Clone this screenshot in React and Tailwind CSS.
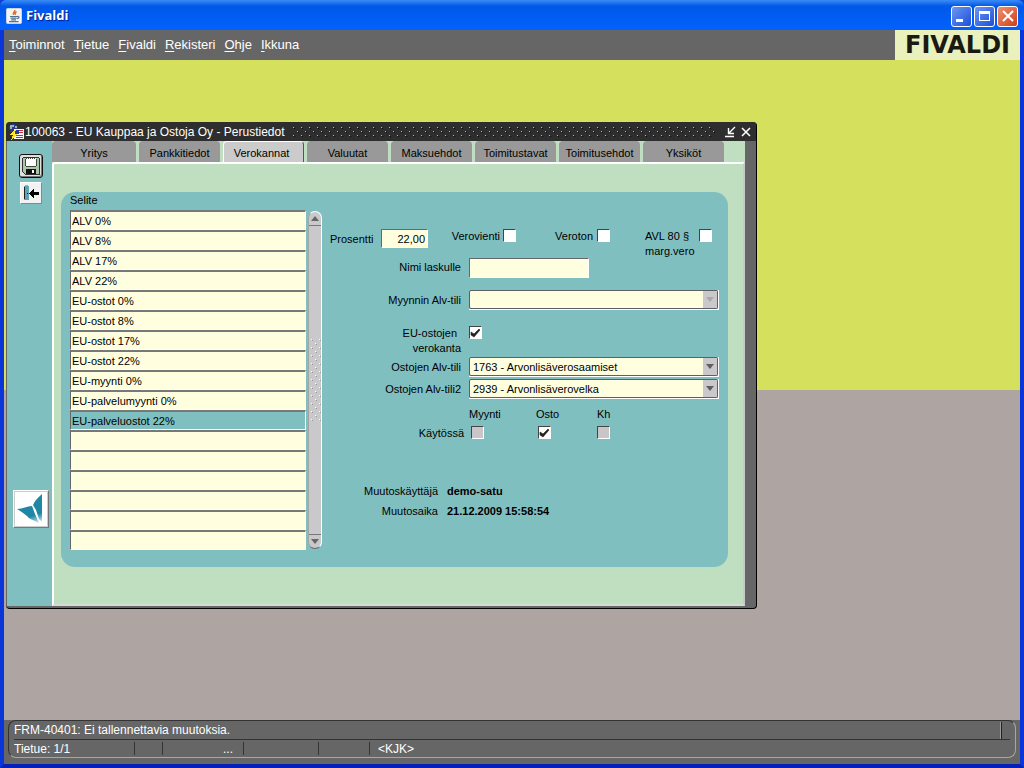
import React, { useState } from 'react';

const MENU = ['Toiminnot', 'Tietue', 'Fivaldi', 'Rekisteri', 'Ohje', 'Ikkuna'];

const TABS = [
  'Yritys',
  'Pankkitiedot',
  'Verokannat',
  'Valuutat',
  'Maksuehdot',
  'Toimitustavat',
  'Toimitusehdot',
  'Yksiköt',
];

const RATES = [
  'ALV 0%',
  'ALV 8%',
  'ALV 17%',
  'ALV 22%',
  'EU-ostot 0%',
  'EU-ostot 8%',
  'EU-ostot 17%',
  'EU-ostot 22%',
  'EU-myynti 0%',
  'EU-palvelumyynti 0%',
  'EU-palveluostot 22%',
  '',
  '',
  '',
  '',
  '',
  '',
];

const sunken = 'border border-t-[#66676b] border-l-[#66676b] border-r-white border-b-white bg-[#ffffe0]';

function JavaIcon() {
  return (
    <svg viewBox="0 0 16 16" className="size-4">
      <rect x="0.5" y="0.5" width="15" height="15" rx="1" fill="#f4f4f0" stroke="#c8d4e8" />
      <path d="M8.600 2c1.200 1.600-2.400 2.600-1 4.800M10.600 3.600c-1.600 1-2 1.800-1 3.200" fill="none" stroke="#e06a1c" strokeWidth="1.500" />
      <path d="M4 8.500h7.500M4.600 10.200h6M5.200 11.800h4.800M3 13.600h9.500M11.500 8.500c2.200-.4 1.800 2-.6 2.200" fill="none" stroke="#4f7396" strokeWidth="1.200" />
    </svg>
  );
}

function FormIcon() {
  return (
    <svg viewBox="0 0 16 16" className="size-4 shrink-0" shapeRendering="crispEdges">
      <circle cx="5.500" cy="4.500" r="4.500" fill="#2b3787" />
      <path d="M2 1h4v2H4v2H2zM7 2h2v2H7z" fill="#8fb6c4" />
      <rect x="6" y="5" width="10" height="10" fill="#f6f6f6" />
      <path d="M11 6h4v1h-4zM11 8h4v1h-4zM8 11h7v1H8zM8 13h7v1H8z" fill="#c2303c" />
      <path d="M7 6h4v4H7z" fill="#2a3aa0" />
      <path d="M6 6L2 11h3l-2 5 6-6H6l2-4z" fill="#ffe32e" />
      <path d="M6 15h10v1H6z" fill="#333" />
    </svg>
  );
}

function SaveIcon() {
  return (
    <svg viewBox="0 0 20 20" className="size-5" shapeRendering="crispEdges">
      <path d="M2 1h16v1h1v17H4l-3-3V2h1z" fill="#333" />
      <path d="M2 2h16v16H4l-2-2z" fill="#a9c8a4" />
      <path d="M5 2h10v8H5z" fill="#fff" />
      <path d="M5 2h1v1H5zM7 2h1v1H7zM9 2h1v1H9zM11 2h1v1h-1zM13 2h1v1h-1zM5 10h10v1H5zM4 3h1v7H4zM15 3h1v7h-1z" fill="#444" />
      <path d="M5 13h10v5H5z" fill="#111" />
      <path d="M11 14h2v3h-2z" fill="#fff" />
    </svg>
  );
}

function ExitIcon() {
  return (
    <svg viewBox="0 0 18 18" className="size-[18px]" shapeRendering="crispEdges">
      <path d="M2 2h5v14H2z" fill="#5fa3b5" />
      <path d="M2 3h1v12H2z" fill="#222" />
      <path d="M5 9h1v1H5z" fill="#111" />
      <path d="M3 1h3v1H3z" fill="#7fc89a" />
      <path d="M7 9h1V8h1V7h1V6h1V5h1v3h5v3h-5v3h-1v-1h-1v-1H9v-1H8v-1H7z" fill="#000" />
    </svg>
  );
}

function BirdLogo() {
  return (
    <svg viewBox="0 0 32 34" className="h-[34px] w-8">
      <defs>
        <linearGradient id="tail" gradientUnits="userSpaceOnUse" x1="18" y1="17" x2="23" y2="32">
          <stop offset="0.4" stopColor="#1f86a3" />
          <stop offset="1" stopColor="#e4f1f4" />
        </linearGradient>
      </defs>
      <path d="M2 17C8 17 12 14 17 14L20 22L24 31C18 28 14 27 12 24C9 22 6 19 2 17z" fill="url(#tail)" />
      <path d="M18 13C20 8 24 5 27 2V30L24 27L21 18z" fill="url(#tail)" />
    </svg>
  );
}

function CheckBox({ id, label, checked, disabled, onChange }) {
  return (
    <span className="relative block size-[13px] shrink-0">
      <input
        id={id}
        type="checkbox"
        aria-label={label}
        checked={checked}
        disabled={disabled}
        onChange={onChange}
        className="block size-[13px] appearance-none border border-t-[#444] border-l-[#444] border-r-white border-b-white bg-white disabled:bg-[#c9c5c8]"
      />
      {checked && (
        <svg viewBox="0 0 13 13" className="pointer-events-none absolute inset-0 size-[13px]">
          <path d="M2 6l3 2 5-5 1 1-6 7-3-2z" fill="#222" stroke="#222" strokeWidth="0.6" />
        </svg>
      )}
    </span>
  );
}

function Combo({ id, value, disabled }) {
  return (
    <div className="relative w-[250px] border-r border-b border-white">
      <select
        id={id}
        defaultValue={value}
        disabled={disabled}
        className="block h-[19px] w-full appearance-none rounded-[2px] border border-[#5d5e66] bg-[#ffffe0] pl-[3px] text-[11px] leading-4 text-black opacity-100"
      >
        <option value={value}>{value}</option>
      </select>
      <span className="pointer-events-none absolute top-px right-px flex h-[17px] w-[14px] items-center justify-center bg-[#cbc8cb]">
        <svg viewBox="0 0 8 5" className="h-[5px] w-2">
          <path d="M0 0h8L4 5z" fill={disabled ? '#aaa8aa' : '#5f5f62'} />
        </svg>
      </span>
    </div>
  );
}

function TitleBar() {
  return (
    <header className="flex h-[30px] items-center gap-1 rounded-t-md bg-linear-to-b from-[#3a8bf5] from-0% via-[#0058e8] via-20% to-[#0260fb] to-90% px-[6px] pt-[2px]">
      <JavaIcon />
      <h1 className="font-['Open_Sans',sans-serif] text-[13px] font-bold text-white [text-shadow:1px_1px_1px_#0a1883]">Fivaldi</h1>
      <div className="ml-auto flex gap-[2px]">
        <button type="button" aria-label="Pienennä" className="flex size-[21px] items-end rounded-[3px] border border-white bg-linear-to-br from-[#6d95f2] to-[#1c4cd8] p-1">
          <span className="h-[3px] w-[7px] bg-white" />
        </button>
        <button type="button" aria-label="Suurenna" className="flex size-[21px] items-center justify-center rounded-[3px] border border-white bg-linear-to-br from-[#6d95f2] to-[#1c4cd8]">
          <span className="h-[10px] w-[11px] border border-t-[3px] border-white" />
        </button>
        <button type="button" aria-label="Sulje" className="flex size-[21px] items-center justify-center rounded-[3px] border border-white bg-linear-to-br from-[#f0906f] to-[#cf3a14]">
          <svg viewBox="0 0 12 12" className="size-3">
            <path d="M1 1l10 10M11 1L1 11" stroke="#fff" strokeWidth="2" />
          </svg>
        </button>
      </div>
    </header>
  );
}

function MenuBar() {
  return (
    <nav className="flex h-[30px] items-center justify-between bg-[#666] pl-[5px]">
      <div className="flex gap-[9px]">
        {MENU.map((item) => (
          <button key={item} type="button" className="text-[13px] text-white">
            <span className="underline underline-offset-2">{item[0]}</span>
            {item.slice(1)}
          </button>
        ))}
      </div>
      <div className="flex h-full w-[125px] items-center justify-center bg-[#ebf1bd] font-['DejaVu_Sans',sans-serif] text-2xl leading-none font-bold text-[#1a1a12]">
        FIVALDI
      </div>
    </nav>
  );
}

function RateList({ selected, onSelect }) {
  return (
    <div className="flex items-center gap-[2px]">
      <ul className="w-[236px]">
        {RATES.map((rate, i) => (
          <li key={i}>
            <input
              readOnly
              value={rate}
              aria-label={`Selite ${i + 1}`}
              onFocus={() => rate && onSelect(i)}
              className={`block h-5 w-full border border-t-2 border-t-[#77787a] border-l-[#66676b] border-r-white border-b-white pl-px text-[11px] text-black outline-none ${i === selected ? 'bg-[#80bfc0]' : 'bg-[#ffffe0]'}`}
            />
          </li>
        ))}
      </ul>
      <div className="flex h-[338px] w-[14px] flex-col justify-between rounded-full border border-t-white border-r-white border-b-[#66676b] border-l-[#a5a5a5] bg-[#c9c8cb]">
        <button type="button" aria-label="Ylös" className="flex h-[14px] items-center justify-center border-b border-[#77787c]">
          <svg viewBox="0 0 8 5" className="h-[5px] w-2">
            <path d="M0 5h8L4 0z" fill="#666" />
          </svg>
        </button>
        <svg width="12" height="84" className="block">
          <defs>
            <pattern id="grip" width="8" height="8" patternUnits="userSpaceOnUse">
              <path d="M2 1h1v1H2zM6 5h1v1H6z" fill="#fff" />
              <path d="M3 2h1v1H3zM7 6h1v1H7z" fill="#999" />
            </pattern>
          </defs>
          <rect width="12" height="84" fill="url(#grip)" />
        </svg>
        <button type="button" aria-label="Alas" className="flex h-[14px] items-center justify-center border-t border-[#77787c]">
          <svg viewBox="0 0 8 5" className="h-[5px] w-2">
            <path d="M0 0h8L4 5z" fill="#666" />
          </svg>
        </button>
      </div>
    </div>
  );
}

function RateForm() {
  const [flags, setFlags] = useState({ vienti: false, veroton: false, avl: false, eu: true });
  const toggle = (key) => () => setFlags({ ...flags, [key]: !flags[key] });

  return (
    <form className="flex-1 pt-9 pl-2">
      <div className="flex h-[29px] items-start">
        <label htmlFor="prosentti" className="w-[51px] pt-[3px]">Prosentti</label>
        <input id="prosentti" defaultValue="22,00" className={`h-[19px] w-[47px] pr-[2px] text-right ${sunken}`} />
        <div className="flex w-[88px] justify-end gap-[3px]">
          <label htmlFor="vienti">Verovienti</label>
          <CheckBox id="vienti" checked={flags.vienti} onChange={toggle('vienti')} />
        </div>
        <div className="flex w-[94px] justify-end gap-1">
          <label htmlFor="veroton">Veroton</label>
          <CheckBox id="veroton" checked={flags.veroton} onChange={toggle('veroton')} />
        </div>
        <div className="flex w-[102px] justify-end">
          <label htmlFor="avl" className="w-[54px]">AVL 80 § marg.vero</label>
          <CheckBox id="avl" checked={flags.avl} onChange={toggle('avl')} />
        </div>
      </div>
      <div className="flex h-8 items-start gap-2">
        <label htmlFor="nimi" className="w-[131px] pt-[2px] text-right">Nimi laskulle</label>
        <input id="nimi" className={`h-5 w-[120px] ${sunken}`} />
      </div>
      <div className="flex h-9 items-start gap-2">
        <label htmlFor="myynnintili" className="w-[131px] pt-[3px] text-right">Myynnin Alv-tili</label>
        <Combo id="myynnintili" value="" disabled />
      </div>
      <div className="flex h-[31px] items-start gap-2">
        <label htmlFor="eu" className="w-[131px] text-right">
          <span className="block pr-1">EU-ostojen</span>
          <span className="block">verokanta</span>
        </label>
        <CheckBox id="eu" checked={flags.eu} onChange={toggle('eu')} />
      </div>
      <div className="flex h-[22px] items-start gap-2">
        <label htmlFor="ostotili" className="w-[131px] pt-[3px] text-right">Ostojen Alv-tili</label>
        <Combo id="ostotili" value="1763 - Arvonlisäverosaamiset" />
      </div>
      <div className="flex h-[22px] items-start gap-2">
        <label htmlFor="ostotili2" className="w-[131px] pt-[3px] text-right">Ostojen Alv-tili2</label>
        <Combo id="ostotili2" value="2939 - Arvonlisäverovelka" />
      </div>
      <div className="mt-[6px] flex pl-[139px]">
        <span className="w-[67px]">Myynti</span>
        <span className="w-[61px]">Osto</span>
        <span>Kh</span>
      </div>
      <div className="mt-1 flex items-start">
        <span className="w-[141px] pr-[7px] text-right">Käytössä</span>
        <span className="w-[67px]"><CheckBox label="Käytössä Myynti" checked={false} disabled /></span>
        <span className="w-[59px]"><CheckBox label="Käytössä Osto" checked onChange={() => {}} /></span>
        <CheckBox label="Käytössä Kh" checked={false} disabled />
      </div>
      <dl className="mt-[43px] grid grid-cols-[108px_auto] gap-x-[9px] gap-y-[5px]">
        <dt className="text-right">Muutoskäyttäjä</dt>
        <dd className="font-bold">demo-satu</dd>
        <dt className="text-right">Muutosaika</dt>
        <dd className="font-bold">21.12.2009 15:58:54</dd>
      </dl>
    </form>
  );
}

function TaxWindow() {
  const [tab, setTab] = useState('Verokannat');
  const [selected, setSelected] = useState(10);

  return (
    <section className="absolute top-[62px] left-[2px] flex h-[487px] w-[751px] flex-col overflow-hidden rounded-[4px] border-r border-b border-black bg-[#666]">
      <header className="flex h-[19px] shrink-0 items-center bg-[#2e2e2e] pr-1 pl-[2px] text-white">
        <FormIcon />
        <h2 className="ml-px text-xs whitespace-nowrap">100063 - EU Kauppaa ja Ostoja Oy - Perustiedot</h2>
        <svg className="mx-2 h-3 flex-1">
          <defs>
            <pattern id="dots" width="8" height="8" patternUnits="userSpaceOnUse">
              <path d="M1 1h1v1H1zM5 5h1v1H5z" fill="#b8b8b8" />
              <path d="M2 2h1v1H2zM6 6h1v1H6z" fill="#0c0c0c" />
            </pattern>
          </defs>
          <rect width="100%" height="100%" fill="url(#dots)" />
        </svg>
        <button type="button" aria-label="Pienennä ikkuna">
          <svg viewBox="0 0 12 12" className="size-3">
            <path d="M1 10.500h9M11 1L5 7M4.500 2v5.500H10" fill="none" stroke="#fff" strokeWidth="1.400" />
          </svg>
        </button>
        <button type="button" aria-label="Sulje ikkuna" className="ml-1">
          <svg viewBox="0 0 12 12" className="size-3">
            <path d="M2 2l8 8M10 2l-8 8" stroke="#fff" strokeWidth="1.600" />
          </svg>
        </button>
      </header>
      <div className="mr-[11px] mb-[2px] ml-px flex flex-1 bg-[#80bfc0]">
        <aside className="flex w-[45px] flex-col items-center pt-[13px] pl-[3px]">
          <button type="button" aria-label="Tallenna" className="flex size-6 items-center justify-center rounded-[3px] border border-[#111] bg-[#e0e0e0] shadow-[inset_-1px_-1px_0_#777]">
            <SaveIcon />
          </button>
          <button type="button" aria-label="Poistu" className="mt-1 flex size-[22px] items-center justify-center border border-white border-r-[#888] border-b-[#888] bg-[#f2f2f2]">
            <ExitIcon />
          </button>
          <a href="#fivaldi" aria-label="Fivaldi" className="mt-[286px] flex h-[38px] w-9 items-center justify-center border border-white border-r-[#777] border-b-[#777] bg-white shadow-[inset_1px_1px_0_#ccc,inset_-1px_-1px_0_#ccc]">
            <BirdLogo />
          </a>
        </aside>
        <div className="flex flex-1 flex-col bg-[#c0dfc0]">
          <div role="tablist" className="flex h-[21px] gap-[3px]">
            {TABS.map((name, i) => (
              <button
                key={name}
                type="button"
                role="tab"
                aria-selected={name === tab}
                onClick={() => setTab(name)}
                className={`rounded-t-[4px] text-[11px] ${i === 0 ? 'w-[84px]' : 'w-[81px]'} ${name === tab ? 'border-t border-r border-l border-white border-r-[#555] bg-[#cbcbcb] pt-[3px] pr-1' : 'bg-[#999] pt-1'}`}
              >
                {name}
              </button>
            ))}
          </div>
          <div className="flex-1 rounded-tl-[3px] border-2 border-white border-r-[#c9c9c9] border-b-[#d4dcd4] px-[7px] pt-7">
            <div className="mr-2 h-[375px] rounded-[14px] bg-[#80bfc0] pt-[1px] pl-[9px]">
              <div className="flex text-[11px] leading-[15px] text-black">
                <div>
                  <div className="h-[17px]">Selite</div>
                  <RateList selected={selected} onSelect={setSelected} />
                </div>
                <RateForm />
              </div>
            </div>
          </div>
        </div>
      </div>
    </section>
  );
}

function StatusBar() {
  return (
    <footer className="bg-[#666] px-1 pb-[6px] text-xs text-white">
      <div className="rounded-lg border border-t-[#333] border-l-[#333] border-r-[#a5aaa0] border-b-[#a5aaa0] px-[5px]">
        <div className="flex h-[19px] items-center justify-between border-b border-[#333]">
          <span>FRM-40401: Ei tallennettavia muutoksia.</span>
          <span className="mr-2 h-[17px] w-[2px] border-r border-l border-r-[#222] border-l-[#999]" />
        </div>
        <div className="flex h-[17px] items-center">
          <span className="flex h-[13px] w-[121px] items-center border-r border-[#333]">Tietue: 1/1</span>
          <span className="h-[13px] w-7 border-r border-[#333]" />
          <span className="flex h-[13px] w-[81px] items-center justify-end border-r border-[#333] pr-[10px]">...</span>
          <span className="h-[13px] w-[75px] border-r border-[#333]" />
          <span className="h-[13px] w-[51px] border-r border-[#333]" />
          <span className="pl-2">&lt;KJK&gt;</span>
        </div>
      </div>
    </footer>
  );
}

export default function App() {
  return (
    <div className="flex min-h-screen flex-col bg-[#0a3fd8] font-['Liberation_Sans',Arial,sans-serif]">
      <TitleBar />
      <div className="flex flex-1 flex-col border-r-4 border-b-4 border-l-4 border-[#0a35d8] border-b-[#0420b8]">
        <MenuBar />
        <main className="relative flex flex-1 flex-col">
          <div className="flex-1 bg-[#d5e05c]" />
          <div className="flex-1 bg-[#aea5a2]" />
          <TaxWindow />
        </main>
        <StatusBar />
      </div>
    </div>
  );
}
